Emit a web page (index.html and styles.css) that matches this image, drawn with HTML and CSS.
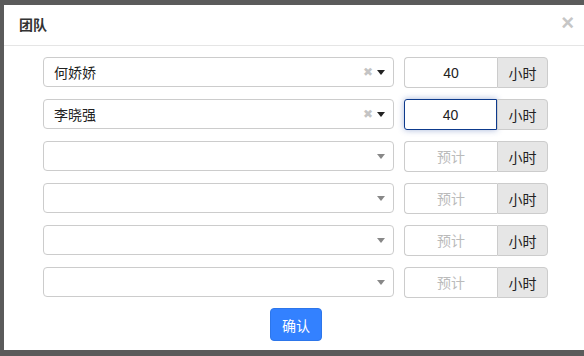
FILE: index.html
```html
<!DOCTYPE html>
<html>
<head>
    <meta charset="UTF-8">
    <title>团队</title>
    <link rel="stylesheet" href="styles.css">
</head>
<body>

<div class="modal">
    <div class="modal-header">
        <h4 class="modal-title">团队</h4>
        <span class="close">&times;</span>
    </div>
    <div class="modal-body">
        <div class="row">
            <div class="select has-value"><span class="select-text">何娇娇</span><span class="clear">&#10006;</span><b class="caret"></b></div>
            <div class="input-group"><input class="form-control" type="text" value="40" placeholder="预计"><span class="addon">小时</span></div>
        </div>
        <div class="row">
            <div class="select has-value"><span class="select-text">李晓强</span><span class="clear">&#10006;</span><b class="caret"></b></div>
            <div class="input-group"><input class="form-control focus" type="text" value="40" placeholder="预计"><span class="addon">小时</span></div>
        </div>
        <div class="row">
            <div class="select"><span class="select-text"></span><b class="caret"></b></div>
            <div class="input-group"><input class="form-control" type="text" placeholder="预计"><span class="addon">小时</span></div>
        </div>
        <div class="row">
            <div class="select"><span class="select-text"></span><b class="caret"></b></div>
            <div class="input-group"><input class="form-control" type="text" placeholder="预计"><span class="addon">小时</span></div>
        </div>
        <div class="row">
            <div class="select"><span class="select-text"></span><b class="caret"></b></div>
            <div class="input-group"><input class="form-control" type="text" placeholder="预计"><span class="addon">小时</span></div>
        </div>
        <div class="row">
            <div class="select"><span class="select-text"></span><b class="caret"></b></div>
            <div class="input-group"><input class="form-control" type="text" placeholder="预计"><span class="addon">小时</span></div>
        </div>
        <div class="footer">
            <button class="btn">确认</button>
        </div>
    </div>
</div>

</body>
</html>
```

FILE: styles.css
```css
*{ margin: 0; padding: 0; box-sizing: border-box;}
body { background: #5b5b5b; font-family: "Liberation Sans", "Noto Sans CJK SC", sans-serif; font-size: 14px; color: #333; padding: 5px 0 0 4px; height: 356px; overflow: hidden;}
.modal { background: #fff; width: 580px; height: 345px;}
.modal-header { height: 41px; border-bottom: 1px solid #e5e5e5; display: flex; align-items: center; justify-content: space-between; padding: 0 10px 2px 15px;}
.modal-title { font-size: 14px; font-weight: bold; color: #333;}
.close { font-size: 22px; font-weight: bold; color: #c6c6c6; line-height: 1; margin-top: -2px;}
.modal-body { padding: 11px 35px 0 39px; display: flex; flex-direction: column; gap: 12px;}
.row { display: flex; gap: 10px; height: 30px;}
.select { width: 351px; height: 30px; border: 1px solid #ccc; border-radius: 4px; display: flex; align-items: center; padding: 0 8px 0 10px;}
.select-text { flex: 1; color: #222;}
.clear { color: #c4c4c4; font-family: "DejaVu Sans", sans-serif; font-size: 12px; margin-right: 4px; line-height: 1;}
.caret { width: 0; height: 0; border-left: 4px solid transparent; border-right: 4px solid transparent; border-top: 5px solid #888;}
.has-value .caret { border-top-color: #222;}
.input-group { display: flex; width: 144px; height: 31px;}
.form-control { width: 93px; height: 31px; border: 1px solid #ccc; border-right: 0; border-radius: 4px 0 0 4px; text-align: center; font-family: inherit; font-size: 14px; color: #222; outline: none; background: #fff;}
.form-control::placeholder { color: #bbb;}
.form-control.focus { border: 1px solid #0d3a8c; border-radius: 3px 0 0 3px; box-shadow: 0 0 6px rgba(60, 90, 170, .45);}
.addon { flex: 1; background: #e6e6e6; border: 1px solid #ccc; border-radius: 0 4px 4px 0; display: flex; align-items: center; justify-content: center; color: #222;}
.footer { display: flex; justify-content: center; margin-top: -1px;}
.btn { width: 52px; height: 33px; background: #3381ff; border: 1px solid #2d76ea; border-radius: 4px; color: #fff; font-family: inherit; font-size: 14px;}
```
